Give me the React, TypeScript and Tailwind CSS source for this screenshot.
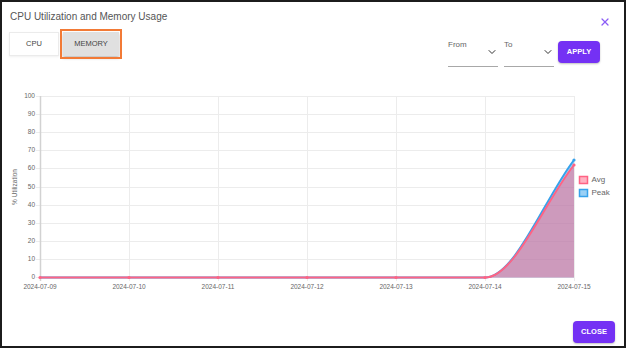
import { X, ChevronDown } from 'lucide-react'

const dates = ['2024-07-09', '2024-07-10', '2024-07-11', '2024-07-12', '2024-07-13', '2024-07-14', '2024-07-15']
const ticks = [0, 10, 20, 30, 40, 50, 60, 70, 80, 90, 100]

const x0 = 40
const step = 89
const yOf = (v: number) => Math.round(277 - v * 1.81) + 0.5

function DateSelect({ label }: { label: string }) {
  return (
    <div className="w-[50px] h-[27px] border-b border-[#a8a8a8] flex justify-between items-start">
      <span className="text-[8px] leading-[10px] text-[#666]">{label}</span>
      <ChevronDown className="mt-[6px] h-[12px] w-[12px] text-[#333]" strokeWidth={2} />
    </div>
  )
}

function Chart() {
  const base = yOf(0)
  const peak = `M ${x0} ${base} L 485 ${base} C 514.7 ${base} 544.3 199 574 160`
  const avg = `M ${x0} ${base} L 485 ${base} C 514.7 ${base} 544.3 202.3 574 165`
  return (
    <svg width="622" height="233" viewBox="2 67 622 233" className="block">
      {ticks.map((t) => (
        <g key={t}>
          <line x1={36} x2={574} y1={yOf(t)} y2={yOf(t)} stroke="#ececec" strokeWidth={1} />
          <text x={35} y={yOf(t)} textAnchor="end" dominantBaseline="middle" fontSize="6.5" fill="#666">
            {t}
          </text>
        </g>
      ))}
      {dates.map((d, i) => (
        <g key={d}>
          <line
            x1={x0 + step * i + 0.5}
            x2={x0 + step * i + 0.5}
            y1={96}
            y2={281}
            stroke={i === 0 ? '#d2d2d2' : '#ececec'}
            strokeWidth={i === 0 ? 1.5 : 1}
          />
          <text x={x0 + step * i} y={287.5} textAnchor="middle" dominantBaseline="middle" fontSize="6.5" fill="#666">
            {d}
          </text>
        </g>
      ))}
      <text
        x={15}
        y={187}
        textAnchor="middle"
        dominantBaseline="middle"
        fontSize="6.5"
        fill="#666"
        transform="rotate(-90 15 187)"
      >
        % Utilization
      </text>

      <path d={`${peak} L 574 ${base} Z`} fill="rgba(54,162,235,0.5)" />
      <path d={`${avg} L 574 ${base} Z`} fill="rgba(255,99,132,0.5)" />
      <path d={peak} fill="none" stroke="#36a2eb" strokeWidth={2} />
      <path d={avg} fill="none" stroke="#ff6384" strokeWidth={2} />
      <circle cx={574} cy={160} r={1.6} fill="#36a2eb" />
      {dates.slice(0, 6).map((d, i) => (
        <circle key={d} cx={x0 + step * i} cy={base} r={1.6} fill="#ff6384" />
      ))}
      <circle cx={574} cy={165} r={1.6} fill="#ff6384" />

      <rect x={579.5} y={176.5} width={8} height={7} fill="rgba(255,99,132,0.5)" stroke="#ff6384" strokeWidth={1.5} />
      <text x={591.5} y={180} dominantBaseline="middle" fontSize="8" fill="#666">
        Avg
      </text>
      <rect x={579.5} y={189.5} width={8} height={7} fill="rgba(54,162,235,0.5)" stroke="#36a2eb" strokeWidth={1.5} />
      <text x={591.5} y={193} dominantBaseline="middle" fontSize="8" fill="#666">
        Peak
      </text>
    </svg>
  )
}

export default function App() {
  return (
    <div className="w-[627px] h-[349px] bg-white font-['Liberation_Sans',Arial,sans-serif]">
      <div className="w-[626px] h-[348px] border-2 border-[#1c1c1c] flex flex-col">
        <div className="h-[28px] flex justify-between items-start pt-[8px] pl-[8px] pr-[13px]">
          <h2 className="text-[10px] leading-[13px] text-[#555] font-normal">CPU Utilization and Memory Usage</h2>
          <button type="button" className="mt-[6px] flex h-[12px] text-[#8b5cf6]" aria-label="Close">
            <X className="h-[12px] w-[12px]" strokeWidth={2.5} />
          </button>
        </div>

        <div className="h-[37px] flex justify-between items-start pl-[7px] pr-[24px]">
          <div className="pt-[2px] flex gap-[4px]">
            <button
              type="button"
              className="w-[50px] h-[24px] bg-white border border-[#ebebeb] shadow-[0_1px_2px_rgba(0,0,0,0.06)] text-[7.5px] text-[#444]"
            >
              CPU
            </button>
            <button
              type="button"
              className="w-[56px] h-[24px] bg-[#e0e0e0] text-[7.5px] text-[#444] outline-2 outline-offset-[1px] outline-[#f27a36] shadow-[0_2px_3px_rgba(0,0,0,0.25)]"
            >
              MEMORY
            </button>
          </div>
          <div className="flex items-start">
            <div className="mt-[10px] flex gap-[6px]">
              <DateSelect label="From" />
              <DateSelect label="To" />
            </div>
            <button
              type="button"
              className="ml-[4px] mt-[11px] w-[42px] h-[22px] rounded-[4px] bg-[#7431f4] text-white text-[7.5px] font-bold shadow-[0_1px_2px_rgba(0,0,0,0.25)]"
            >
              APPLY
            </button>
          </div>
        </div>

        <Chart />

        <div className="flex justify-end pt-[21px] pr-[9px]">
          <button
            type="button"
            className="w-[42px] h-[22px] rounded-[4px] bg-[#7431f4] text-white text-[7.5px] font-bold shadow-[0_1px_2px_rgba(0,0,0,0.25)]"
          >
            CLOSE
          </button>
        </div>
      </div>
    </div>
  )
}
